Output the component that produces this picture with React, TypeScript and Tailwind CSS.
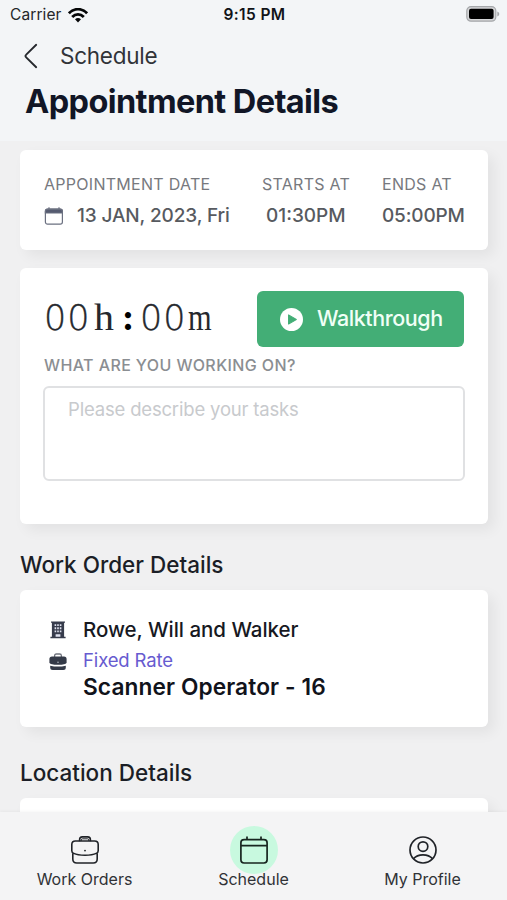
import type { ReactNode } from 'react'

const WORK_ORDER = {
  company: 'Rowe, Will and Walker',
  rate: 'Fixed Rate',
  title: 'Scanner Operator - 16'
}

function StatusBar(): ReactNode {
  return (
    <div className="grid h-[30px] grid-cols-3 items-center pr-[7px] pl-[10px] text-[15.5px] text-[#25272b]">
      <div className="flex items-center gap-[6px]">
        <span className="tracking-[0.1px]">Carrier</span>
        <svg width="20" height="15" viewBox="0 0 20 15" fill="none" stroke="#050607" strokeWidth="2.8">
          <path d="M.9 5.4C6-.2 14-.2 19.1 5.4" />
          <path d="M4.2 9C7.6 5.4 12.4 5.4 15.8 9" />
          <path d="M7 11.3Q10 8.9 13 11.3L10 14.5Z" fill="#050607" stroke="none" />
        </svg>
      </div>
      <span className="ml-[-1px] text-center font-semibold tracking-[0.4px] whitespace-nowrap text-[#111317]">
        9:15 PM
      </span>
      <svg className="mt-[-2px] justify-self-end" width="34" height="16" viewBox="0 0 34 16">
        <rect x=".8" y=".6" width="29" height="14.6" rx="4.2" fill="#d4d5d7" stroke="#a5a7aa" strokeWidth="1.2" />
        <rect x="3" y="2.8" width="24.6" height="10.2" rx="2" fill="#000" />
        <path d="M31.3 5.6v4.8q2-.7 2-2.4t-2-2.4Z" fill="#a5a7aa" />
      </svg>
    </div>
  )
}

function Card({ className, children }: { className: string; children?: ReactNode }): ReactNode {
  return (
    <section className={`rounded-[6px] bg-white shadow-[6px_6px_14px_rgba(0,0,0,0.06)] ${className}`}>
      {children}
    </section>
  )
}

function SmallCalendarIcon(): ReactNode {
  return (
    <svg width="20" height="20" viewBox="0 0 20 20" fill="none" stroke="#6b7080" strokeWidth="1.2">
      <rect x="1.4" y="3.2" width="17" height="15" rx="2.2" />
      <path d="M1.4 7V5.5q0-2.3 2.3-2.3h12.4q2.3 0 2.3 2.3V7Z" fill="#555b70" />
      <path d="M5 1.2v2.2M15 1.2v2.2" />
    </svg>
  )
}

function BuildingIcon(): ReactNode {
  return (
    <svg width="16" height="18" viewBox="0 0 16 18">
      <path d="M1 .6h14v1.2h-.9v14h1.5v1.4H.4v-1.4h1.5v-14H1Z" fill="#373c4c" />
      <path
        d="M4.6 3.2h1.6v1.9H4.6zm2.6 0h1.6v1.9H7.2zm2.6 0h1.6v1.9H9.8zM4.6 6.3h1.6v1.9H4.6zm2.6 0h1.6v1.9H7.2zm2.6 0h1.6v1.9H9.8zM4.6 9.4h1.6v1.9H4.6zm2.6 0h1.6v1.9H7.2zm2.6 0h1.6v1.9H9.8zM5.6 13.2h4.8v2.6H5.6z"
        fill="#dfe2ef"
      />
    </svg>
  )
}

function BriefcaseFillIcon(): ReactNode {
  return (
    <svg width="18" height="18" viewBox="0 0 18 18">
      <path d="M5.6 4V2.8Q5.6 1 7.4 1h3.2q1.8 0 1.8 1.8V4" fill="none" stroke="#70747e" strokeWidth="1.3" />
      <path d="M3 3.5h12q2.6 0 2.6 2.6v3.1q0 1.2-1.5 1.7-7.1 1.7-14.2 0Q.4 10.4.4 9.2V6.1Q.4 3.5 3 3.5Z" fill="#343a48" />
      <path d="M1.2 12.7q7.8 1.7 15.6 0v1.9q0 2.5-2.5 2.5H3.7q-2.5 0-2.5-2.5Z" fill="#343a48" />
      <circle cx="9" cy="9.3" r=".7" fill="#c9ccd4" />
    </svg>
  )
}

function BriefcaseIcon(): ReactNode {
  return (
    <svg width="28" height="28" viewBox="0 0 28 28" fill="none" stroke="#202328" strokeWidth="1.6">
      <path d="M8.6 5.2V3.8Q8.6.9 11.3.9h5.4q2.7 0 2.7 2.9v1.4" />
      <path d="M10.2 5V4q0-1.2 1.2-1.2h5.2q1.2 0 1.2 1.2v1" strokeWidth="1" />
      <path d="M4.4 5h19.2q3.6 0 3.6 3.6v6.1q0 2.1-2 2.7-3.6 1.9-11.2 1.9t-11.2-1.9q-2-.6-2-2.7V8.6Q.8 5 4.4 5Z" />
      <path d="M1.8 17.2V23q0 4 4 4h16.4q4 0 4-4v-5.8" />
      <circle cx="14" cy="14.6" r=".9" fill="#202328" stroke="none" />
    </svg>
  )
}

function CalendarIcon(): ReactNode {
  return (
    <svg width="28" height="28" viewBox="0 0 28 28" fill="none" stroke="#17251f" strokeWidth="1.7">
      <rect x=".9" y="3.6" width="26.2" height="23.4" rx="3.2" />
      <path d="M1 9.7h26M7 .5v3.2M21 .5v3.2" />
    </svg>
  )
}

function ProfileIcon(): ReactNode {
  return (
    <svg width="28" height="28" viewBox="0 0 28 28" fill="none" stroke="#202328" strokeWidth="1.7">
      <circle cx="14" cy="14" r="13" />
      <circle cx="14" cy="10.6" r="4.8" />
      <path d="M4.4 22.8q3.4-4 9.6-4t9.6 4" />
    </svg>
  )
}

function Timer(): ReactNode {
  return (
    <div className="flex w-[170px] items-baseline pt-[2px] text-[36px] leading-[48px] text-[#25282d]" aria-label="Elapsed time">
      <span className="w-12 origin-left scale-x-97 font-['DejaVu_Sans'] font-extralight tracking-[1px] [-webkit-text-stroke:0.4px_#25282d]">
        00
      </span>
      <span className="w-6 scale-x-105 text-center font-['Liberation_Serif'] text-[38px]">h</span>
      <span className="w-6 text-center font-['Liberation_Serif'] text-[38px] font-bold text-black">:</span>
      <span className="w-12 origin-left scale-x-97 font-['DejaVu_Sans'] font-extralight tracking-[1px] [-webkit-text-stroke:0.4px_#25282d]">
        00
      </span>
      <span className="w-6 origin-left scale-x-80 font-['Liberation_Serif'] text-[38px]">m</span>
    </div>
  )
}

function NavItem({ label, active, children }: { label: string; active?: boolean; children: ReactNode }): ReactNode {
  return (
    <a className="flex flex-1 flex-col items-center text-[16px] text-[#303236]">
      <span className={`flex size-12 items-center justify-center rounded-full ${active ? 'bg-[#c8f9df]' : ''}`}>
        {children}
      </span>
      <span className="mt-[-5px] leading-[20px] whitespace-nowrap">{label}</span>
    </a>
  )
}

export default function App(): ReactNode {
  return (
    <div className="flex h-[900px] w-[507px] flex-col overflow-hidden bg-[#f0f0f1] font-[Inter,sans-serif]">
      <header className="h-[141px] shrink-0 bg-[#f3f5f7]">
        <StatusBar />
        <div className="flex h-[52px] items-center pl-[23px]">
          <svg width="15" height="26" viewBox="0 0 15 26" fill="none" stroke="#25282d" strokeWidth="1.9">
            <path d="M13.2 1.8 3.2 11.6q-1.5 1.4 0 2.8l10 9.8" strokeLinecap="round" strokeLinejoin="round" />
          </svg>
          <span className="ml-[22px] text-[22.5px] tracking-[-0.25px] text-[#303338]">Schedule</span>
        </div>
        <h1 className="pl-[25px] text-[32.5px] leading-[40px] font-bold tracking-[-0.6px] whitespace-nowrap text-[#111626]">
          Appointment Details
        </h1>
      </header>

      <main className="min-h-0 flex-1 overflow-hidden pt-[9px] pr-[19px] pl-5">
        <Card className="flex h-[100px] pt-[23px] pl-6 whitespace-nowrap">
          <div className="w-[218px]">
            <div className="text-[16px] leading-[22px] tracking-[0.28px] text-[#77797e]">APPOINTMENT DATE</div>
            <div className="mt-[9px] flex items-center text-[19px] leading-6 text-[#575a60]">
              <SmallCalendarIcon />
              <span className="ml-[13px] font-medium tracking-[-0.12px]">13 JAN, 2023, Fri</span>
            </div>
          </div>
          <div className="w-[120px]">
            <div className="text-[16px] leading-[22px] tracking-[0.28px] text-[#77797e]">STARTS AT</div>
            <div className="mt-[9px] ml-1 text-[19px] leading-6 font-medium text-[#575a60]">01:30PM</div>
          </div>
          <div>
            <div className="text-[16px] leading-[22px] tracking-[0.28px] text-[#77797e]">ENDS AT</div>
            <div className="mt-[9px] text-[19px] leading-6 font-medium tracking-[-0.15px] text-[#575a60]">05:00PM</div>
          </div>
        </Card>

        <Card className="mt-[18px] h-[256px] px-6 pt-[23px]">
          <div className="flex justify-between">
            <Timer />
            <button className="flex h-14 w-[207px] items-center rounded-[6px] bg-[#43ae76] pl-[23px] text-[21.5px] text-[#f0fff6]">
              <svg width="23" height="23" viewBox="0 0 22 22">
                <circle cx="11" cy="11" r="11" fill="#fff" />
                <path d="M8.2 6.6v8.8l7.4-4.4Z" fill="#43ae76" stroke="#43ae76" strokeLinejoin="round" />
              </svg>
              <span className="ml-[14px] pb-px font-medium tracking-[-0.43px]">Walkthrough</span>
            </button>
          </div>
          <div className="mt-[7px] text-[16px] leading-[22px] font-medium tracking-[0.4px] text-[#8b8e92]">
            WHAT ARE YOU WORKING ON?
          </div>
          <textarea
            className="mt-[10px] -ml-px block h-[95px] w-[422px] resize-none rounded-[6px] border-2 border-[#e0e1e3] px-[23px] py-[9px] text-[18.5px] leading-6 tracking-[-0.18px] placeholder:text-[#c8cacd]"
            placeholder="Please describe your tasks"
          />
        </Card>

        <h2 className="mt-[26px] text-[22.5px] leading-[30px] font-medium text-[#1b1e26]">Work Order Details</h2>
        <Card className="mt-[10px] h-[137px] pt-6 pl-[29px]">
          <div className="flex h-8 items-center">
            <div className="flex w-[34px] pl-[1px]">
              <BuildingIcon />
            </div>
            <span className="text-[20.5px] font-medium tracking-[-0.03px] text-[#17191f]">{WORK_ORDER.company}</span>
          </div>
          <div className="flex">
            <div className="w-[34px] pt-[7px]">
              <BriefcaseFillIcon />
            </div>
            <div>
              <div className="pt-[2px] text-[18.5px] leading-6 tracking-[-0.13px] text-[#675bd0]">{WORK_ORDER.rate}</div>
              <div className="text-[22.7px] leading-[29px] font-semibold tracking-[0.1px] text-[#11131b]">
                {WORK_ORDER.title}
              </div>
            </div>
          </div>
        </Card>

        <h2 className="mt-[31px] text-[22.5px] leading-[30px] font-medium text-[#1b1e26]">Location Details</h2>
        <Card className="mt-[10px] h-10" />
      </main>

      <nav className="flex h-[88px] shrink-0 bg-[#f4f4f5] pt-[14px] shadow-[0_-1px_3px_rgba(0,0,0,0.04)]">
        <NavItem label="Work Orders">
          <BriefcaseIcon />
        </NavItem>
        <NavItem label="Schedule" active>
          <CalendarIcon />
        </NavItem>
        <NavItem label="My Profile">
          <ProfileIcon />
        </NavItem>
      </nav>
    </div>
  )
}
